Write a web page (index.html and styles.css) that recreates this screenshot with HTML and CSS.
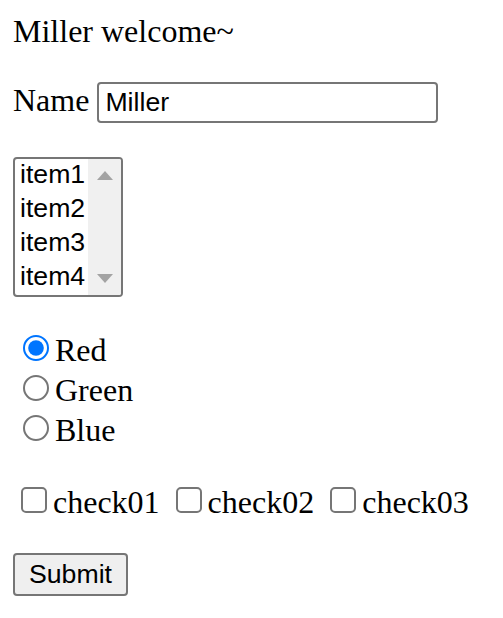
FILE: index.html
```
<!DOCTYPE html>
<html>
<head>
<meta charset="utf-8">
<link rel="stylesheet" href="styles.css">
</head>
<body>
<p class="title">Miller welcome~</p>
<p class="row">Name <input class="text" type="text" value="Miller"></p>
<div class="list" role="listbox">
  <div class="items">
    <div class="opt">item1</div>
    <div class="opt">item2</div>
    <div class="opt">item3</div>
    <div class="opt">item4</div>
  </div>
  <div class="sbar">
    <div class="sbtn"><span class="tri up"></span></div>
    <div class="sbtn"><span class="tri down"></span></div>
  </div>
</div>
<p class="radios">
<input type="radio" name="c" checked>Red<br>
<input type="radio" name="c">Green<br>
<input type="radio" name="c">Blue
</p>
<p class="checks">
<input type="checkbox">check01
<input type="checkbox">check02
<input type="checkbox">check03
</p>
<button class="btn">Submit</button>
</body>
</html>
```
FILE: styles.css
```
html {
  zoom: 2;
}
body {
  margin: 6.5px;
  font-family: "Liberation Serif", "Times New Roman", serif;
  font-size: 16px;
  color: #000;
  background: #fff;
}
.title {
  margin-top: 0;
}
.text {
  font-family: "Liberation Sans", Arial, sans-serif;
  font-size: 13.33px;
  width: 170.5px;
  height: 20.5px;
  box-sizing: border-box;
  border: 1px solid #767676;
  border-radius: 2px;
  padding: 1px 3px;
  margin: 0;
}
.list {
  display: flex;
  width: 55px;
  height: 70px;
  margin-top: 17px;
  box-sizing: border-box;
  border: 1px solid #767676;
  border-radius: 2px;
  overflow: hidden;
  font-family: "Liberation Sans", Arial, sans-serif;
  font-size: 13.33px;
}
.items {
  flex: 1;
}
.opt {
  height: 17px;
  line-height: 15px;
  padding-left: 2.5px;
}
.sbar {
  width: 16.5px;
  background: #f0f0f0;
  display: flex;
  flex-direction: column;
  justify-content: space-between;
}
.sbtn {
  height: 16.5px;
  display: flex;
  align-items: center;
  justify-content: center;
}
.tri {
  width: 0;
  height: 0;
  border-left: 4.2px solid transparent;
  border-right: 4.2px solid transparent;
}
.tri.up {
  border-bottom: 4.5px solid #a3a3a3;
}
.tri.down {
  border-top: 4.5px solid #a3a3a3;
}
.btn {
  font-family: "Liberation Sans", Arial, sans-serif;
  font-size: 13.33px;
  margin: 0;
  padding: 1px 6px;
  border: 1px solid #767676;
  border-radius: 2px;
  background: #efefef;
  color: #000;
  height: 21.5px;
  width: 57.5px;
}
```
